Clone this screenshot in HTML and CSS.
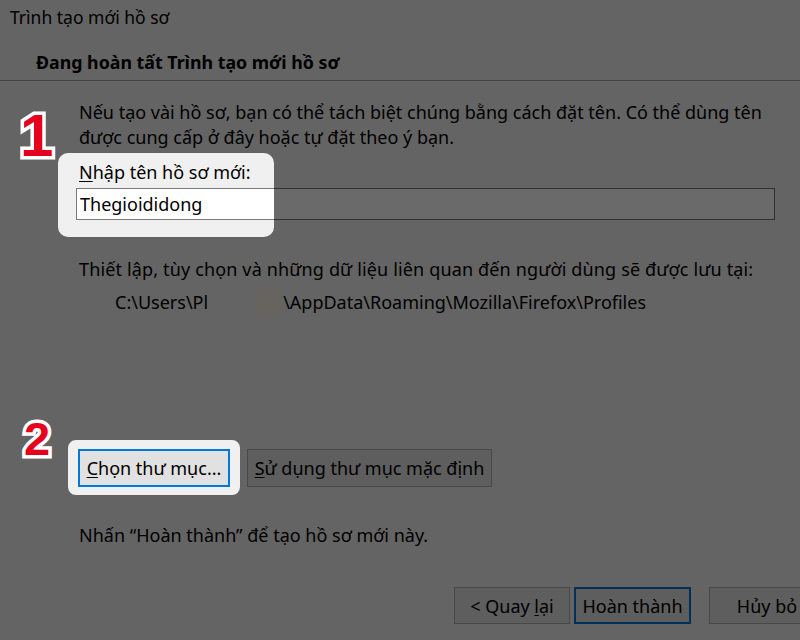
FILE: index.html
```html
<!DOCTYPE html>
<html lang="vi">
<head>
<meta charset="utf-8">
<link rel="stylesheet" href="styles.css">
</head>
<body>
<div class="dialog">
  <div class="titlebar">Trình tạo mới hồ sơ</div>
  <div class="header">Đang hoàn tất Trình tạo mới hồ sơ</div>
  <div class="content">
    <p class="intro">Nếu tạo vài hồ sơ, bạn có thể tách biệt chúng bằng cách đặt tên. Có thể dùng tên được cung cấp ở đây hoặc tự đặt theo ý bạn.</p>
    <div class="label"><u>N</u>hập tên hồ sơ mới:</div>
    <div class="input">Thegioididong</div>
    <div class="info">Thiết lập, tùy chọn và những dữ liệu liên quan đến người dùng sẽ được lưu tại:</div>
    <div class="path"><span>C:\Users\Pl</span><span class="redact"></span><span>\AppData\Roaming\Mozilla\Firefox\Profiles</span></div>
    <div class="btnrow">
      <div class="btn btn-focus"><span><u>C</u>họn thư mục...</span></div>
      <div class="btn btn-wide"><span><u>S</u>ử dụng thư mục mặc định</span></div>
    </div>
    <div class="finish">Nhấn “Hoàn thành” để tạo hồ sơ mới này.</div>
  </div>
  <div class="footer">
    <div class="btn btn-foot"><span>&lt; Quay <u>l</u>ại</span></div>
    <div class="btn btn-foot btn-default"><span>Hoàn thành</span></div>
    <div class="btn btn-foot btn-cancel"><span>Hủy bỏ</span></div>
  </div>
  <svg class="shade" width="800" height="640" viewBox="0 0 800 640">
    <path fill-rule="evenodd" fill="rgba(0,0,0,0.585)" d="M0 0H800V640H0Z M68 153H264A10 10 0 0 1 274 163V227A10 10 0 0 1 264 237H68A10 10 0 0 1 58 227V163A10 10 0 0 1 68 153Z M76 440H232A8 8 0 0 1 240 448V487A8 8 0 0 1 232 495H76A8 8 0 0 1 68 487V448A8 8 0 0 1 76 440Z"/>
  </svg>
  <span class="step step1">1</span>
  <span class="step step2">2</span>
</div>
</body>
</html>
```
FILE: styles.css
```css
* { box-sizing: border-box; }
html, body { margin: 0; padding: 0; }
body {
  font-family: "Noto Sans", "Open Sans", sans-serif;
  color: #000;
  background: #f0f0f0;
}
.dialog {
  position: relative;
  width: 800px;
  height: 640px;
  overflow: hidden;
  background: #f0f0f0;
  font-size: 18px;
}
.titlebar {
  height: 34px;
  padding-left: 10px;
  line-height: 34px;
  font-size: 17.5px;
}
.header {
  height: 47px;
  padding-left: 36px;
  padding-top: 16px;
  font-weight: bold;
  font-size: 17.8px;
  line-height: 25px;
  border-bottom: 1px solid #9a9a9a;
  box-shadow: 0 1px 0 #ffffff;
}
.content {
  padding: 19px 0 0 79px;
}
.intro {
  margin: 0;
  width: 690px;
  line-height: 25px;
}
.label {
  margin-top: 10px;
  line-height: 24px;
}
.input {
  margin: 4px 0 0 -3px;
  width: 699px;
  height: 32px;
  background: #fff;
  border: 1px solid #7a7a7a;
  padding-left: 3px;
  line-height: 30px;
}
.info {
  margin-top: 37px;
  line-height: 24px;
  letter-spacing: 0.15px;
  white-space: nowrap;
}
.path {
  margin-top: 5px;
  padding-left: 36px;
  display: flex;
  align-items: center;
  line-height: 24px;
}
.redact {
  width: 25px;
  height: 31px;
  background: #f7f1e8;
  margin: 0 2px 0 48px;
}
.btnrow {
  display: flex;
  gap: 17px;
  margin-top: 132px;
  margin-left: -1px;
}
.btn {
  height: 38px;
  background: #e1e1e1;
  border: 1px solid #adadad;
  display: flex;
  align-items: center;
  justify-content: center;
  white-space: nowrap;
}
.btn-focus {
  width: 152px;
  border: 2px solid #0078d7;
}
.btn-wide { width: 245px; }
.finish {
  margin-top: 36px;
  line-height: 24px;
}
.footer {
  position: absolute;
  left: 454px;
  top: 587px;
  display: flex;
  gap: 4px;
}
.btn-foot {
  width: 116px;
  height: 37px;
}
.btn-default {
  width: 117px;
  border: 2px solid #0078d7;
}
.btn-cancel {
  margin-left: 14px;
}
u { text-underline-offset: 2px; }
.shade {
  position: absolute;
  left: 0;
  top: 0;
  pointer-events: none;
}
.step {
  position: absolute;
  font-family: "Liberation Sans", sans-serif;
  font-weight: bold;
  color: #e6001e;
  -webkit-text-stroke: 7px #ffffff;
  paint-order: stroke fill;
  line-height: 1;
}
.step1 {
  left: 20px;
  top: 106px;
  font-size: 60px;
}
.step2 {
  left: 24px;
  top: 415px;
  font-size: 47px;
}
```
